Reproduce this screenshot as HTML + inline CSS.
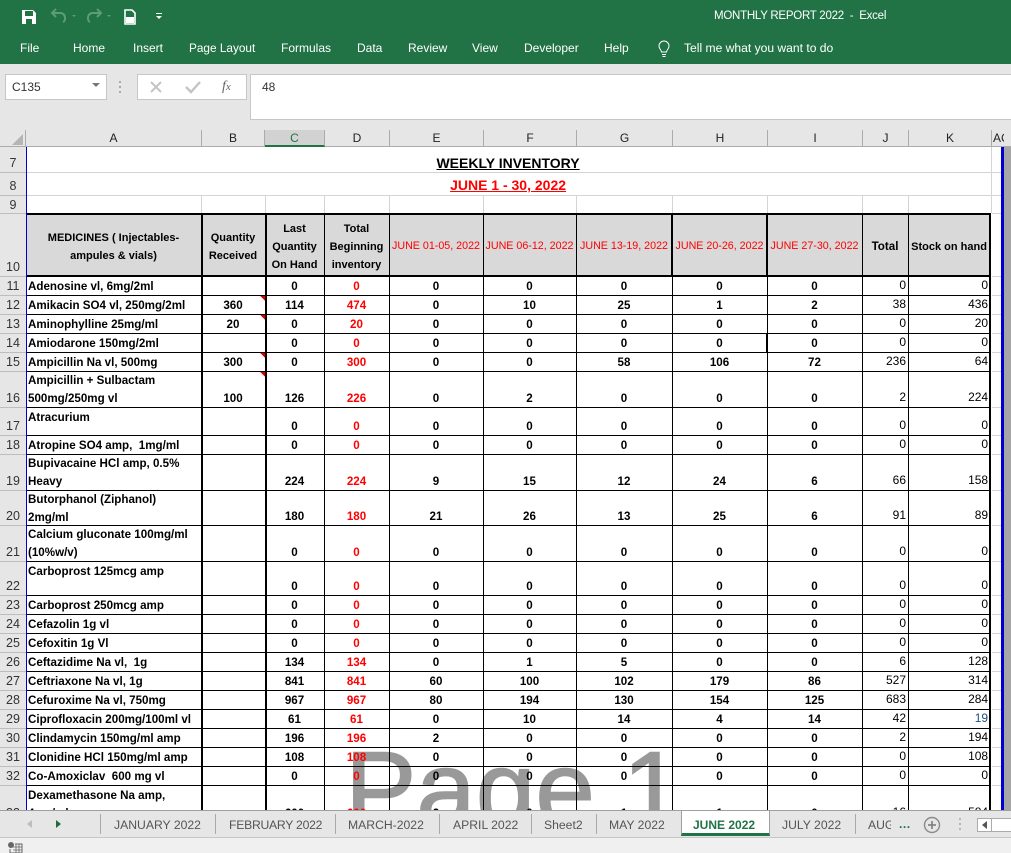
<!DOCTYPE html>
<html><head><meta charset="utf-8"><title>MONTHLY REPORT 2022 - Excel</title>
<style>
*{box-sizing:border-box}
html,body{margin:0;padding:0}
body{width:1011px;height:853px;position:relative;overflow:hidden;background:#fff;font-family:"Liberation Sans",sans-serif}
.a{position:absolute;white-space:nowrap}
#top{position:absolute;left:0;top:0;width:1011px;height:147px;background:#e6e6e6;z-index:5}
#green{position:absolute;left:0;top:0;width:1011px;height:64px;background:#217346}
.rt{position:absolute;top:41px;color:#fff;font-size:12px;line-height:15px;white-space:nowrap}
.col{position:absolute;top:130px;height:17px;line-height:17px;text-align:center;font-size:12px;color:#222;border-right:1px solid #ababab}
#wm{position:absolute;left:345px;top:728px;font-size:107px;line-height:123px;word-spacing:-2px;color:#999;-webkit-text-stroke:1.5px #999;z-index:1;white-space:nowrap}
#sheet{position:absolute;left:0;top:147px;z-index:2;border-collapse:separate;border-spacing:0;table-layout:fixed;width:1001px}
#sheet td{padding:0;vertical-align:bottom;text-align:center;font-size:11.6px;font-weight:bold;line-height:18px;color:#000;overflow:hidden;white-space:nowrap}
#sheet tr.n td:not(:first-child){position:relative;top:1px}
#sheet td:nth-child(1){background:#e6e6e6;color:#333;font-weight:normal;font-size:12.5px;text-align:center;line-height:17px}
#sheet td:nth-child(2){text-align:left;padding-left:2px}
#sheet td:nth-child(5){color:#f00}
#sheet td:nth-child(11),#sheet td:nth-child(12){text-align:right;padding-right:2px;font-weight:normal;font-size:12px}
#sheet tr.n td:nth-child(11),#sheet tr.n td:nth-child(12){top:-1px}
#sheet tr.h td{vertical-align:middle;background:#d9d9d9;text-align:center;padding:4px 0 0;line-height:18px;font-size:11px;font-weight:bold}
#sheet tr.h td:nth-child(1){background:#e6e6e6;vertical-align:bottom;font-size:12.5px;font-weight:normal;line-height:17px;padding:0}
#sheet tr.h td:nth-child(13){background:#fff}
#sheet tr.h td.bt{vertical-align:bottom;padding:0 0 2px}
#sheet tr.h td.d{color:#f00;font-size:10.7px;font-weight:normal;padding:2px 0 0}
#sheet tr.b td{height:19px}
#sheet td.t{vertical-align:top !important;padding-top:1px !important}
#grid{position:absolute;left:0;top:0;z-index:3}
#bot{position:absolute;left:0;top:810px;width:1011px;height:43px;background:#f0f0f0;z-index:5}
#tabs{position:absolute;left:0;top:0;width:1011px;height:28px;background:#e6e6e6;border-top:1px solid #9f9f9f;border-bottom:1px solid #c6c6c6}
.tab{position:absolute;top:7px;font-size:12.2px;line-height:15px;color:#555;white-space:nowrap}
.sep{position:absolute;top:3px;width:1px;height:20px;background:#a9a9a9}
</style></head><body>

<div id="top">
 <div id="green"></div>
 <svg class="a" style="left:0;top:0" width="180" height="64">
  <path d="M22 10h11l3 3v11H22z" fill="#fff"/><rect x="25" y="11" width="8" height="5" fill="#217346"/><rect x="26" y="19" width="6" height="5" fill="#217346"/>
  <path d="M63 22c3-1 3-8-2-9h-8M56 9l-4 4 4 4" fill="none" stroke="#5d9c78" stroke-width="2"/>
  <path d="M72 15l4 0-2 2z" fill="#5d9c78"/>
  <path d="M90 22c-3-1-3-8 2-9h8M97 9l4 4-4 4" fill="none" stroke="#5d9c78" stroke-width="2"/>
  <path d="M107 15l4 0-2 2z" fill="#5d9c78"/>
  <path d="M125 10h7l3 3v11h-10z" fill="none" stroke="#fff" stroke-width="1.6"/><rect x="126" y="17" width="8" height="6" fill="#fff"/>
  <rect x="156" y="13" width="6" height="1" fill="#fff"/><path d="M156 16h6l-3 3z" fill="#fff"/>
 </svg>
 <div class="a" style="left:714px;top:9px;color:#fff;font-size:11.5px;line-height:14px;letter-spacing:-.25px">MONTHLY REPORT 2022&nbsp; -&nbsp; Excel</div>
 <div class="rt" style="left:20px">File</div>
 <div class="rt" style="left:73px">Home</div>
 <div class="rt" style="left:133px">Insert</div>
 <div class="rt" style="left:189px;font-size:11.8px">Page Layout</div>
 <div class="rt" style="left:281px">Formulas</div>
 <div class="rt" style="left:357px">Data</div>
 <div class="rt" style="left:408px">Review</div>
 <div class="rt" style="left:472px">View</div>
 <div class="rt" style="left:524px">Developer</div>
 <div class="rt" style="left:604px">Help</div>
 <svg class="a" style="left:656px;top:40px" width="16" height="18"><path d="M5.500 12c0-2-2.500-3-2.500-6a5 5 0 0 1 10 0c0 3-2.500 4-2.500 6zM6 14.500h4M6.500 16.500h3" fill="none" stroke="#fff" stroke-width="1"/></svg>
 <div class="rt" style="left:684px;font-size:12.1px">Tell me what you want to do</div>

 <div class="a" style="left:5px;top:74px;width:102px;height:26px;background:#fff;border:1px solid #c6c6c6;font-size:12px;line-height:25px;color:#333;padding-left:6px">C135</div>
 <svg class="a" style="left:90px;top:82px" width="12" height="8"><path d="M2 1h8L6 5z" fill="#777"/></svg>
 <svg class="a" style="left:118px;top:80px" width="8" height="14"><path d="M2 1v2M2 6v2M2 11v2" stroke="#aaa" stroke-width="2"/></svg>
 <div class="a" style="left:137px;top:74px;width:110px;height:26px;background:#fff;border:1px solid #c6c6c6"></div>
 <svg class="a" style="left:146px;top:78px" width="90" height="18">
  <path d="M5 4l10 10M15 4L5 14" stroke="#c4c4c4" stroke-width="2" fill="none"/>
  <path d="M40 9l5 5 9-10" stroke="#c4c4c4" stroke-width="2.400" fill="none"/>
 </svg>
 <div class="a" style="left:222px;top:79px;font:italic 14px/15px 'Liberation Serif',serif;color:#666"><i>f</i><span style="font-size:11px">x</span></div>
 <div class="a" style="left:250px;top:74px;width:761px;height:46px;background:#fff;border:1px solid #c6c6c6;border-right:0;font-size:12px;line-height:25px;color:#333;padding-left:11px">48</div>

 <div class="a" style="left:0;top:130px;width:1011px;height:17px;background:#e6e6e6;border-bottom:1px solid #ababab"></div>
 <svg class="a" style="left:0;top:130px" width="26" height="17"><path d="M23 4v11H12z" fill="#b5b5b5"/></svg>
 <div class="a" style="left:25px;top:130px;width:1px;height:17px;background:#ababab"></div>
 <div class="col" style="left:26px;width:176px">A</div>
 <div class="col" style="left:202px;width:63px">B</div>
 <div class="col" style="left:265px;width:60px;background:#d2d2d2;color:#217346;border-bottom:2px solid #217346;height:17px">C</div>
 <div class="col" style="left:325px;width:65px">D</div>
 <div class="col" style="left:390px;width:94px">E</div>
 <div class="col" style="left:484px;width:93px">F</div>
 <div class="col" style="left:577px;width:96px">G</div>
 <div class="col" style="left:673px;width:95px">H</div>
 <div class="col" style="left:768px;width:95px">I</div>
 <div class="col" style="left:863px;width:46px">J</div>
 <div class="col" style="left:909px;width:83px">K</div>
 <div class="col" style="left:992px;width:12px;overflow:hidden;text-align:left;padding-left:1px;border-right:0">AC</div>
</div>

<div id="wm">Page 1</div>

<table id="sheet">
<colgroup><col style="width:26px"><col style="width:175px"><col style="width:64px"><col style="width:59px"><col style="width:65px"><col style="width:94px"><col style="width:93px"><col style="width:96px"><col style="width:95px"><col style="width:95px"><col style="width:46px"><col style="width:82px"><col style="width:11px"></colgroup>
<tr style="height:25px"><td>7</td><td colspan="11" style="text-align:center;font-size:14px;line-height:23px"><u style="position:relative;top:3px;left:-1px">WEEKLY INVENTORY</u></td><td></td></tr>
<tr style="height:23px"><td>8</td><td colspan="11" style="text-align:center;font-size:14px;line-height:23px;color:#f00;padding:0"><u style="color:#f00;position:relative;top:2px">JUNE 1 - 30, 2022</u></td><td></td></tr>
<tr style="height:19px"><td>9</td><td></td><td></td><td></td><td></td><td></td><td></td><td></td><td></td><td></td><td></td><td></td><td></td></tr>
<tr class="h" style="height:62px"><td>10</td><td>MEDICINES ( Injectables-<br>ampules &amp; vials)</td><td>Quantity<br>Received</td><td class="bt">Last<br>Quantity<br>On Hand</td><td class="bt" style="color:#000">Total<br>Beginning<br>inventory</td><td class="d">JUNE 01-05, 2022</td><td class="d">JUNE 06-12, 2022</td><td class="d">JUNE 13-19, 2022</td><td class="d">JUNE 20-26, 2022</td><td class="d">JUNE 27-30, 2022</td><td style="font-size:11.6px">Total</td><td>Stock on hand</td><td></td></tr>
<tr class="b n"><td>11</td><td>Adenosine vl, 6mg/2ml</td><td></td><td>0</td><td>0</td><td>0</td><td>0</td><td>0</td><td>0</td><td>0</td><td>0</td><td>0</td><td></td></tr>
<tr class="b n"><td>12</td><td>Amikacin SO4 vl, 250mg/2ml</td><td>360</td><td>114</td><td>474</td><td>0</td><td>10</td><td>25</td><td>1</td><td>2</td><td>38</td><td>436</td><td></td></tr>
<tr class="b n"><td>13</td><td>Aminophylline 25mg/ml</td><td>20</td><td>0</td><td>20</td><td>0</td><td>0</td><td>0</td><td>0</td><td>0</td><td>0</td><td>20</td><td></td></tr>
<tr class="b n"><td>14</td><td>Amiodarone 150mg/2ml</td><td></td><td>0</td><td>0</td><td>0</td><td>0</td><td>0</td><td>0</td><td>0</td><td>0</td><td>0</td><td></td></tr>
<tr class="b n"><td>15</td><td>Ampicillin Na vl, 500mg</td><td>300</td><td>0</td><td>300</td><td>0</td><td>0</td><td>58</td><td>106</td><td>72</td><td>236</td><td>64</td><td></td></tr>
<tr class="n" style="height:36px"><td>16</td><td>Ampicillin + Sulbactam<br>500mg/250mg vl</td><td>100</td><td>126</td><td>226</td><td>0</td><td>2</td><td>0</td><td>0</td><td>0</td><td>2</td><td>224</td><td></td></tr>
<tr class="n" style="height:28px"><td>17</td><td class="t">Atracurium</td><td></td><td>0</td><td>0</td><td>0</td><td>0</td><td>0</td><td>0</td><td>0</td><td>0</td><td>0</td><td></td></tr>
<tr class="b n"><td>18</td><td>Atropine SO4 amp,&nbsp; 1mg/ml</td><td></td><td>0</td><td>0</td><td>0</td><td>0</td><td>0</td><td>0</td><td>0</td><td>0</td><td>0</td><td></td></tr>
<tr class="n" style="height:36px"><td>19</td><td>Bupivacaine HCl amp, 0.5%<br>Heavy</td><td></td><td>224</td><td>224</td><td>9</td><td>15</td><td>12</td><td>24</td><td>6</td><td>66</td><td>158</td><td></td></tr>
<tr class="n" style="height:35px"><td>20</td><td style="line-height:17.500px">Butorphanol (Ziphanol)<br>2mg/ml</td><td></td><td>180</td><td>180</td><td>21</td><td>26</td><td>13</td><td>25</td><td>6</td><td>91</td><td>89</td><td></td></tr>
<tr class="n" style="height:36px"><td>21</td><td>Calcium gluconate 100mg/ml<br>(10%w/v)</td><td></td><td>0</td><td>0</td><td>0</td><td>0</td><td>0</td><td>0</td><td>0</td><td>0</td><td>0</td><td></td></tr>
<tr class="n" style="height:34px"><td>22</td><td class="t">Carboprost 125mcg amp</td><td></td><td>0</td><td>0</td><td>0</td><td>0</td><td>0</td><td>0</td><td>0</td><td>0</td><td>0</td><td></td></tr>
<tr class="b n"><td>23</td><td>Carboprost 250mcg amp</td><td></td><td>0</td><td>0</td><td>0</td><td>0</td><td>0</td><td>0</td><td>0</td><td>0</td><td>0</td><td></td></tr>
<tr class="b n"><td>24</td><td>Cefazolin 1g vl</td><td></td><td>0</td><td>0</td><td>0</td><td>0</td><td>0</td><td>0</td><td>0</td><td>0</td><td>0</td><td></td></tr>
<tr class="b n"><td>25</td><td>Cefoxitin 1g Vl</td><td></td><td>0</td><td>0</td><td>0</td><td>0</td><td>0</td><td>0</td><td>0</td><td>0</td><td>0</td><td></td></tr>
<tr class="b n"><td>26</td><td>Ceftazidime Na vl,&nbsp; 1g</td><td></td><td>134</td><td>134</td><td>0</td><td>1</td><td>5</td><td>0</td><td>0</td><td>6</td><td>128</td><td></td></tr>
<tr class="b n"><td>27</td><td>Ceftriaxone Na vl, 1g</td><td></td><td>841</td><td>841</td><td>60</td><td>100</td><td>102</td><td>179</td><td>86</td><td>527</td><td>314</td><td></td></tr>
<tr class="b n"><td>28</td><td>Cefuroxime Na vl, 750mg</td><td></td><td>967</td><td>967</td><td>80</td><td>194</td><td>130</td><td>154</td><td>125</td><td>683</td><td>284</td><td></td></tr>
<tr class="b n"><td>29</td><td>Ciprofloxacin 200mg/100ml vl</td><td></td><td>61</td><td>61</td><td>0</td><td>10</td><td>14</td><td>4</td><td>14</td><td>42</td><td style="color:#1f4e79">19</td><td></td></tr>
<tr class="b n"><td>30</td><td>Clindamycin 150mg/ml amp</td><td></td><td>196</td><td>196</td><td>2</td><td>0</td><td>0</td><td>0</td><td>0</td><td>2</td><td>194</td><td></td></tr>
<tr class="b n"><td>31</td><td>Clonidine HCl 150mg/ml amp</td><td></td><td>108</td><td>108</td><td>0</td><td>0</td><td>0</td><td>0</td><td>0</td><td>0</td><td>108</td><td></td></tr>
<tr class="b n"><td>32</td><td>Co-Amoxiclav&nbsp; 600 mg vl</td><td></td><td>0</td><td>0</td><td>0</td><td>0</td><td>0</td><td>0</td><td>0</td><td>0</td><td>0</td><td></td></tr>
<tr class="n" style="height:37px"><td>33</td><td>Dexamethasone Na amp,<br>4mg/ml</td><td></td><td>600</td><td>600</td><td>2</td><td>0</td><td>1</td><td>1</td><td>0</td><td>16</td><td>584</td><td></td></tr>
</table>

<svg id="grid" width="1011" height="853" shape-rendering="crispEdges">
 <path d="M27 172.500H1001M27 195.500H1001M992 213.500H1001M992 276.500H1001M992 295.500H1001M992 314.500H1001M992 333.500H1001M992 352.500H1001M992 371.500H1001M992 407.500H1001M992 435.500H1001M992 454.500H1001M992 490.500H1001M992 525.500H1001M992 561.500H1001M992 595.500H1001M992 614.500H1001M992 633.500H1001M992 652.500H1001M992 671.500H1001M992 690.500H1001M992 709.500H1001M992 728.500H1001M992 747.500H1001M992 766.500H1001M992 785.500H1001M201.500 195V213M265.500 195V213M324.500 195V213M389.500 195V213M483.500 195V213M576.500 195V213M672.500 195V213M767.500 195V213M862.500 195V213M908.500 195V213M991.500 147V213" stroke="#d4d4d4" fill="none"/>
 <path d="M0 172.500H26M0 195.500H26M0 213.500H26M0 276.500H26M0 295.500H26M0 314.500H26M0 333.500H26M0 352.500H26M0 371.500H26M0 407.500H26M0 435.500H26M0 454.500H26M0 490.500H26M0 525.500H26M0 561.500H26M0 595.500H26M0 614.500H26M0 633.500H26M0 652.500H26M0 671.500H26M0 690.500H26M0 709.500H26M0 728.500H26M0 747.500H26M0 766.500H26M0 785.500H26" stroke="#bdbdbd" fill="none"/>
 <path d="M27 295.500H991M27 314.500H991M27 333.500H991M27 352.500H991M27 371.500H991M27 407.500H991M27 435.500H991M27 454.500H991M27 490.500H991M27 525.500H991M27 561.500H991M27 595.500H991M27 614.500H991M27 633.500H991M27 652.500H991M27 671.500H991M27 690.500H991M27 709.500H991M27 728.500H991M27 747.500H991M27 766.500H991M27 785.500H991" stroke="#000" fill="none"/>
 <path d="M324.500 214V810M389.500 214V810M483.500 214V810M576.500 214V810M672.500 276V810M767.500 276V810M862.500 214V810M908.500 214V810" stroke="#000" fill="none"/>
 <rect x="27" y="213" width="964" height="2" fill="#000"/>
 <rect x="27" y="275" width="964" height="2" fill="#000"/>
 <rect x="201" y="213" width="2" height="597" fill="#000"/>
 <rect x="265" y="213" width="2" height="597" fill="#000"/>
 <rect x="671" y="213" width="2" height="63" fill="#000"/>
 <rect x="766" y="213" width="2" height="63" fill="#000"/>
 <rect x="766" y="334" width="2" height="19" fill="#000"/>
 <rect x="989" y="213" width="2" height="597" fill="#000"/>
 <rect x="26" y="147" width="1" height="663" fill="#0000d4"/>
 <rect x="1001" y="147" width="3" height="663" fill="#0000d4"/>
 <rect x="1004" y="147" width="7" height="663" fill="#a6a6a6"/>
 <path d="M260 296h5v5zM260 315h5v5zM260 353h5v5zM260 372h5v5z" fill="#e00000"/>
</svg>

<div id="bot">
 <div id="tabs">
  <svg class="a" style="left:20px;top:6px" width="50" height="14"><path d="M12 3v8L7 7z" fill="#bdbdbd"/><path d="M36 3v8l5-4z" fill="#1f6b3f"/></svg>
  <div class="sep" style="left:100px"></div>
  <div class="tab" style="left:114px">JANUARY 2022</div>
  <div class="sep" style="left:215px"></div>
  <div class="tab" style="left:229px;letter-spacing:-.25px">FEBRUARY 2022</div>
  <div class="sep" style="left:335px"></div>
  <div class="tab" style="left:348px">MARCH-2022</div>
  <div class="sep" style="left:439px"></div>
  <div class="tab" style="left:453px">APRIL 2022</div>
  <div class="sep" style="left:531px"></div>
  <div class="tab" style="left:544px">Sheet2</div>
  <div class="sep" style="left:596px"></div>
  <div class="tab" style="left:609px">MAY 2022</div>
  <div class="a" style="left:681px;top:-1px;width:89px;height:26px;background:#fff;border:1px solid #9f9f9f;border-top:1px solid #9f9f9f;border-bottom:3px solid #217346"></div>
  <div class="tab" style="left:693px;color:#217346;font-weight:bold;font-size:12px">JUNE 2022</div>
  <div class="tab" style="left:782px">JULY 2022</div>
  <div class="sep" style="left:855px"></div>
  <div class="tab" style="left:868px;width:23px;overflow:hidden">AUG</div>
  <div class="tab" style="left:899px;color:#217346;font-weight:bold;letter-spacing:.5px;top:6px">...</div>
  <svg class="a" style="left:922px;top:4px" width="20" height="20"><circle cx="10" cy="10" r="7.500" fill="none" stroke="#8a8a8a" stroke-width="1.400"/><path d="M10 6v8M6 10h8" stroke="#777" stroke-width="1.500"/></svg>
  <svg class="a" style="left:956px;top:6px" width="8" height="14"><path d="M4 1v2M4 6v2M4 11v2" stroke="#b5b5b5" stroke-width="2"/></svg>
  <div class="a" style="left:977px;top:7px;width:34px;height:14px;background:#fff;border:1px solid #ababab;border-right:0"></div>
  <div class="a" style="left:991px;top:8px;width:1px;height:12px;background:#ababab"></div>
  <svg class="a" style="left:980px;top:9px" width="10" height="10"><path d="M7 1v8L2 5z" fill="#555"/></svg>
 </div>
 <svg class="a" style="left:7px;top:31px" width="16" height="12"><circle cx="4" cy="4" r="3" fill="#666"/><path d="M8 3h7v9H3V8" fill="none" stroke="#666"/><path d="M6 6h9M6 9h9M9 3v9M12 3v9" stroke="#666" stroke-width=".8"/></svg>
</div>
</body></html>
